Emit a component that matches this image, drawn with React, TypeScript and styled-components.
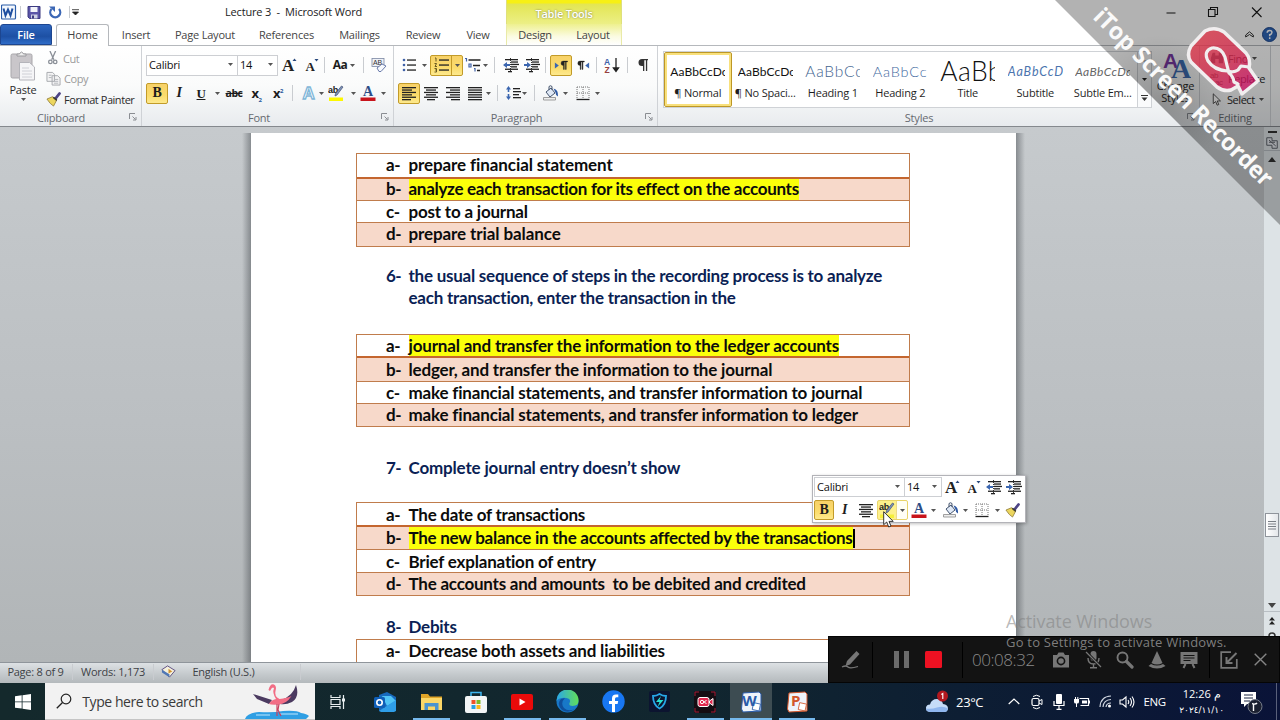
import type { ReactNode } from "react"
import styled, { createGlobalStyle, css } from "styled-components"

const GlobalStyle = createGlobalStyle`
  * { box-sizing: border-box; }
  body {
    margin: 0;
    overflow: hidden;
    font-family: "Open Sans", "Noto Sans", sans-serif;
    font-size: 11px;
    letter-spacing: -0.2px;
    color: #2b2b2b;
  }
  svg { display: block; flex: none; }
`

const Screen = styled.div`
  position: relative;
  width: 1280px;
  height: 720px;
  overflow: hidden;
  display: flex;
  flex-direction: column;
  background: #fff;
`

/* ---------- shared bits ---------- */

const Slot = styled.div<{ $w: number; $h?: number }>`
  width: ${(p) => p.$w}px;
  height: ${(p) => (p.$h ? `${p.$h}px` : "100%")};
  flex: none;
  display: flex;
  align-items: center;
  justify-content: center;
  white-space: nowrap;
`

const Gap = styled.div<{ $w: number }>`
  width: ${(p) => p.$w}px;
  flex: none;
`

const Divider = styled.div<{ $h?: number; $color?: string }>`
  width: 1px;
  height: ${(p) => p.$h ?? 16}px;
  flex: none;
  background: ${(p) => p.$color ?? "#c9ccd0"};
`

const Pressed = styled.div<{ $w: number; $h?: number; $soft?: boolean }>`
  width: ${(p) => p.$w}px;
  height: ${(p) => p.$h ?? 21}px;
  flex: none;
  display: flex;
  align-items: center;
  justify-content: center;
  border: 1px solid ${(p) => (p.$soft ? "#e9d46a" : "#c29b29")};
  border-radius: 2px;
  background: ${(p) => (p.$soft ? "linear-gradient(90deg, #fdf08c 18px, #fffef5 19px)" : "linear-gradient(#f7d168, #fbdc6c 60%, #fde98d)")};
`

const Glyph = styled.span<{ $size?: number; $italic?: boolean; $underline?: boolean; $strike?: boolean; $sans?: boolean }>`
  font-family: ${(p) => (p.$sans ? '"Open Sans", sans-serif' : '"Liberation Serif", serif')};
  font-weight: bold;
  font-size: ${(p) => p.$size ?? 14}px;
  line-height: 1;
  letter-spacing: -0.5px;
  color: #1d1d1d;
  font-style: ${(p) => (p.$italic ? "italic" : "normal")};
  text-decoration: ${(p) => (p.$underline ? "underline" : p.$strike ? "line-through" : "none")};
  sup, sub { font-size: 6px; color: #27579c; line-height: 0; }
`

const Caret = ({ color = "#555" }: { color?: string }) => (
  <svg width="5" height="3" viewBox="0 0 5 3">
    <path d="M0 0h5L2.5 3z" fill={color} />
  </svg>
)

type Row = [number, number]
const Lines = ({ rows, step = 2.4, y = 2 }: { rows: Row[]; step?: number; y?: number }) => (
  <>
    {rows.map(([x, w], i) => (
      <rect key={i} x={x} y={y + i * step} width={w} height="1.3" fill="#222" />
    ))}
  </>
)

const Icon = ({ size = 16, children }: { size?: number; children: ReactNode }) => (
  <svg width={size} height={size} viewBox="0 0 16 16">{children}</svg>
)

/* ---------- ribbon icons ---------- */

const AlignLeft = () => <Icon><Lines rows={[[1, 14], [1, 10], [1, 14], [1, 10], [1, 14], [1, 9]]} /></Icon>
const AlignCenter = () => <Icon><Lines rows={[[1, 14], [3, 10], [1, 14], [3, 10], [1, 14], [4, 8]]} /></Icon>
const AlignRight = () => <Icon><Lines rows={[[1, 14], [5, 10], [1, 14], [5, 10], [1, 14], [6, 9]]} /></Icon>
const Justify = () => <Icon><Lines rows={[[1, 14], [1, 14], [1, 14], [1, 14], [1, 14], [1, 14]]} /></Icon>

const Bullets = () => (
  <Icon>
    {[3, 8, 13].map((y) => <circle key={y} cx="3" cy={y} r="1.3" fill="#3f62a8" />)}
    <Lines rows={[[6, 9], [6, 9], [6, 9]]} step={5} y={2.4} />
  </Icon>
)
const Numbering = () => (
  <Icon>
    <path d="M2 1h1v3.500M1.500 6.500h2l-1.500 3h2M1.500 11.500h2v1.500h-1 1v2h-2" stroke="#6b5a20" strokeWidth="1" fill="none" />
    <Lines rows={[[6, 10], [6, 10], [6, 10]]} step={5} y={2.4} />
  </Icon>
)
const Multilevel = () => (
  <svg width="19" height="16" viewBox="0 0 19 16">
    <path d="M1 1.500h1.500v3M5 7h2v3H5zM10 11.500h1v3" stroke="#3f62a8" strokeWidth="1.200" fill="none" />
    <path d="M4.500 3h12M9 8.500h7M13 13.500h3" stroke="#222" strokeWidth="1.300" />
  </svg>
)
const Indent = ({ left }: { left?: boolean }) => (
  <Icon>
    <Lines rows={[[2, 13], [8, 7], [8, 8], [8, 6], [2, 13], [5, 4]]} />
    <path d={left ? "M0 8l4-3v2h3v2H4v2z" : "M7 8L3 5v2H0v2h3v2z"} fill="#3b66b0" />
    <path d="M7.5 1v14" stroke="#222" strokeWidth=".9" strokeDasharray="1 1" />
  </Icon>
)
const Spacing = () => (
  <Icon>
    <path d="M3.500 1L1 4.500h1.700v2.500h1.600V4.500H6zM3.500 15L1 11.500h1.700V9h1.600v2.500H6z" fill="#3b66b0" />
    <Lines rows={[[8, 7], [8, 8], [8, 6], [8, 8]]} step={3} y={3} />
  </Icon>
)
const Bucket = () => (
  <Icon>
    <path d="M3 7l5-4 4 5-5 4z" fill="#e0e9f6" stroke="#44546e" />
    <path d="M6 5V1.500q1.500-1.500 3 0V5" fill="none" stroke="#44546e" />
    <path d="M10.500 3.500q5 1 4.500 8-2.500-1-2.500-4z" fill="#2f5aa5" />
    <path d="M.5 12.500h12v2.500H.5z" fill="#eee" stroke="#888" strokeWidth=".8" />
  </Icon>
)
const Borders = () => (
  <Icon>
    <path d="M2 2h12v12M2 2v12M8 2v12M2 8h12" fill="none" stroke="#777" strokeDasharray="1 1" />
    <path d="M1.500 14.500h13" stroke="#222" strokeWidth="1.300" />
  </Icon>
)
const SortIcon = () => (
  <Icon>
    <text x="0" y="7.500" fontSize="8.500" fontWeight="bold" fill="#3f62a8" fontFamily="Liberation Sans, sans-serif">A</text>
    <text x="0.500" y="15.500" fontSize="8.500" fontWeight="bold" fill="#96403f" fontFamily="Liberation Sans, sans-serif">Z</text>
    <path d="M12 1v12M9.500 11l2.500 3.500 2.500-3.500z" stroke="#222" strokeWidth="1.300" fill="#222" />
  </Icon>
)
const Pilcrow = () => (
  <Icon>
    <path d="M13 2H7a3.500 3.500 0 0 0 0 7h1v5h1.300V3.300h1.600V14h1.300V3.300H13z" fill="#333" />
  </Icon>
)
const Direction = ({ rtl }: { rtl?: boolean }) => (
  <Icon size={14}>
    <g transform={rtl ? "translate(-6 0)" : ""}>
      <path d="M15.500 3.500H10.500a2.400 2.400 0 0 0 0 5h.3V13h1V4.500h1.200V13h1V4.500h1.500z" fill="#222" stroke="#222" strokeWidth=".4" />
    </g>
    <path d={rtl ? "M15 5v7l-4.500-3.500z" : "M1 5v7l4.500-3.500z"} fill="#3b66b0" />
  </Icon>
)
const Highlighter = ({ bar = "#fdf800" }: { bar?: string }) => (
  <svg width="17" height="17" viewBox="0 0 17 17">
    <text x="0" y="7.500" fontSize="9" fontWeight="bold" fill="#222" fontFamily="Liberation Sans, sans-serif">ab</text>
    <path d="M15 2l-6 8-2 1 .5-2.500L13.500 1z" fill="#7f93b8" stroke="#3d4f72" strokeWidth=".7" />
    <path d="M1 12.500h14v3.500H1z" fill={bar} />
  </svg>
)
const FontColor = () => (
  <svg width="16" height="17" viewBox="0 0 16 17">
    <text x="8" y="11" textAnchor="middle" fontSize="14" fontWeight="bold" fill="#2d4d87" fontFamily="Liberation Serif, serif">A</text>
    <path d="M.5 12.500h15v3.500H.5z" fill="#c8141c" />
  </svg>
)
const TextEffect = () => (
  <svg width="17" height="17" viewBox="0 0 17 17">
    <text x="8.500" y="14" textAnchor="middle" fontSize="17" fontWeight="bold" fill="#fff" stroke="#7fb6d8" strokeWidth="1.300" fontFamily="Liberation Sans, sans-serif">A</text>
  </svg>
)
const Resize = ({ up, size }: { up?: boolean; size: number }) => (
  <svg width="16" height="17" viewBox="0 0 16 17">
    <text x="7" y="14" textAnchor="middle" fontSize={size} fontWeight="bold" fill="#222" fontFamily="Liberation Serif, serif">A</text>
    <path d={up ? "M11.500 4l2-2.500 2 2.500z" : "M11.500 2h4l-2 2.500z"} fill="#27477c" />
  </svg>
)
const ClearFormat = () => (
  <Icon>
    <rect x="1" y="1.500" width="12" height="8" fill="#eef1f7" stroke="#7b87a2" strokeWidth=".8" />
    <text x="2" y="8" fontSize="7" fill="#333" fontFamily="Liberation Sans, sans-serif">AB</text>
    <path d="M6 11l5-4 4 2-5 5.500H8z" fill="#f7f9fd" stroke="#6a7bab" />
  </Icon>
)
const Painter = ({ size = 15 }: { size?: number }) => (
  <Icon size={size}>
    <path d="M14.500 1.500l-4 5" stroke="#4d4486" strokeWidth="2.800" strokeLinecap="round" />
    <path d="M1 7.500l6-2.500 4.500 3.500L8 15q-3.500-2-7-7.500z" fill="#ecd65e" stroke="#8a7430" strokeWidth=".8" />
    <path d="M8.500 5l3.500 3-1 1.500L7 6z" fill="#3d3c33" />
  </Icon>
)
const CutIcon = () => (
  <Icon size={14}>
    <path d="M4.500 0l4.500 10M11 0L6.500 10" stroke="#8a8f97" strokeWidth="1.500" />
    <circle cx="5" cy="12.500" r="2" fill="none" stroke="#8a8f97" strokeWidth="1.500" />
    <circle cx="10.500" cy="12.500" r="2" fill="none" stroke="#8a8f97" strokeWidth="1.500" />
  </Icon>
)
const CopyIcon = () => (
  <Icon size={15}>
    <path d="M1 1.500h6l2 2V11H1zM6.500 5h6l2.500 2.500V15H6.500z" fill="#f3f3f4" stroke="#a4a7ac" />
    <path d="M3 4.500h3M3 7h3M8.500 9h4.500M8.500 11h4.500M8.500 13h4.500" stroke="#b2b5ba" />
  </Icon>
)
const PasteIcon = () => (
  <svg width="26" height="30" viewBox="0 0 26 30">
    <rect x="1" y="3" width="21" height="24" rx="1.500" fill="#c9c6ca" stroke="#a9a7ab" />
    <path d="M7 5V3h2.500q2-4 4 0H16v2z" fill="#eee" stroke="#99989c" />
    <path d="M9.500 11.500h10l5 4.500v13h-15z" fill="#f5f5f7" stroke="#b4b4ba" />
    <path d="M12 17h7M12 20h10M12 23h10M12 26h10" stroke="#cfd0d6" />
  </svg>
)
const Launcher = () => (
  <svg width="8" height="8" viewBox="0 0 8 8">
    <path d="M.5 6V.5H6M3.500 3.500l3 3M7 4v3H4" fill="none" stroke="#8a8d92" />
  </svg>
)

/* ---------- title bar and tabs ---------- */

const TitleBar = styled.header`
  height: 24px;
  flex: none;
  display: flex;
  align-items: center;
`
const Title = styled.div`
  width: 137px;
  height: 24px;
  line-height: 23px;
  font-size: 11px;
  letter-spacing: -0.18px;
  white-space: pre;
  color: #222;
`
const ContextTitle = styled.div`
  width: 116px;
  height: 24px;
  padding-top: 4px;
  text-align: center;
  line-height: 20px;
  font-weight: 600;
  color: #fff;
  text-shadow: 0 0 2px #77774a;
  letter-spacing: -0.25px;
  border: 1px solid #dfe07c;
  border-width: 0 1px;
  background: linear-gradient(#f7f014 0 3px, #e3e552 4px, #ecef86 24px);
`
const TabBar = styled.nav`
  height: 22px;
  flex: none;
  display: flex;
  border-bottom: 1px solid #b5b8bc;
`
const tabBase = css`
  display: flex;
  align-items: center;
  justify-content: center;
  height: 21px;
  flex: none;
  color: #444;
  letter-spacing: -0.2px;
`
const Tab = styled.div<{ $w: number }>`
  ${tabBase}
  width: ${(p) => p.$w}px;
`
const FileTab = styled.div`
  ${tabBase}
  width: 52px;
  color: #fff;
  font-weight: 600;
  border-radius: 3px 3px 0 0;
  border: 1px solid #1d4690;
  background: linear-gradient(#2d66bf, #1d50a4 60%, #2f6cc7);
`
const ActiveTab = styled.div`
  ${tabBase}
  width: 53px;
  height: 22px;
  padding-bottom: 2px;
  border: 1px solid #b5b8bc;
  border-bottom: 0;
  border-radius: 3px 3px 0 0;
  background: #fff;
`
const ContextTabs = styled.div`
  display: flex;
  width: 116px;
  height: 21px;
  border: 1px solid #e9eaa8;
  border-width: 0 1px;
  background: linear-gradient(#eef08f, #fbfbe2 60%, #fff);
`

const Header = () => (
  <>
    <TitleBar>
      <Gap $w={1} />
      <svg width="16" height="16" viewBox="0 0 16 16">
        <rect x=".5" y="1" width="14" height="14" rx="1" fill="#f4f8fd" stroke="#2a5ca8" strokeWidth="1.200" />
        <path d="M2.500 4.500l2 7 2.500-6 2.500 6 2-7" fill="none" stroke="#1f4fa0" strokeWidth="2" />
      </svg>
      <Gap $w={3} />
      <Divider $h={12} />
      <Gap $w={5} />
      <svg width="16" height="15" viewBox="0 0 16 15">
        <path d="M2 1.500h12v12H3.500L2 12z" fill="#5b55a8" stroke="#3c3a80" />
        <path d="M4.500 2h7v5h-7z" fill="#f3f4fa" />
        <path d="M5 9.500h6.500v4H5z" fill="#cfd1e4" />
        <path d="M6 10.500h2v3H6z" fill="#3c3a80" />
      </svg>
      <Gap $w={6} />
      <svg width="14" height="14" viewBox="0 0 14 14">
        <path d="M3.500 4A5 5 0 1 0 11 4" fill="none" stroke="#3c67b5" strokeWidth="2.300" />
        <path d="M1 1.500h6v5.500z" fill="#3c67b5" />
      </svg>
      <Gap $w={7} />
      <Divider $h={12} />
      <Gap $w={2} />
      <svg width="7" height="7" viewBox="0 0 7 7"><path d="M0 .7h7M.5 3h6L3.500 6z" fill="#222" stroke="#222" strokeWidth=".8" /></svg>
      <Gap $w={146} />
      <Title>Lecture 3  -  Microsoft Word</Title>
      <Gap $w={144} />
      <ContextTitle>Table Tools</ContextTitle>
      <Gap $w={542} />
      <svg width="98" height="16" viewBox="0 0 98 16">
        <path d="M2.500 9h9M44.500 5.500h6.500v7h-6.500zM46.500 5.500v-2h7v7h-2.300M88 3.500l9.500 9.500M97.500 3.500L88 13" fill="none" stroke="#1a1a1a" strokeWidth="1.100" />
      </svg>
    </TitleBar>
    <TabBar>
      <FileTab>File</FileTab>
      <Gap $w={4} />
      <ActiveTab>Home</ActiveTab>
      <Tab $w={54}>Insert</Tab>
      <Tab $w={84}>Page Layout</Tab>
      <Tab $w={79}>References</Tab>
      <Tab $w={67}>Mailings</Tab>
      <Tab $w={60}>Review</Tab>
      <Tab $w={50}>View</Tab>
      <Gap $w={3} />
      <ContextTabs>
        <Tab $w={56}>Design</Tab>
        <Tab $w={60}>Layout</Tab>
      </ContextTabs>
      <Gap $w={620} />
      <Slot $w={14}>
        <svg width="9" height="7" viewBox="0 0 9 7"><path d="M.7 4L4.500.8 8.300 4v2L4.500 3.500.7 6z" fill="#fff" stroke="#333" /></svg>
      </Slot>
      <Slot $w={26}>
        <svg width="15" height="15" viewBox="0 0 15 15">
          <circle cx="7.500" cy="7.500" r="7" fill="#2f66b8" stroke="#1d468c" />
          <path d="M5.200 5.800q0-2.300 2.400-2.300t2.300 2-2.200 2.200v1.500M7.700 10.300v1.700" fill="none" stroke="#fff" strokeWidth="1.500" />
        </svg>
      </Slot>
    </TabBar>
  </>
)

/* ---------- ribbon ---------- */

const Ribbon = styled.section`
  height: 81px;
  flex: none;
  display: flex;
  background: linear-gradient(#fff, #fafbfb 50%, #e8ebee);
  border-bottom: 1px solid #85898e;
`
const Group = styled.div<{ $w: number }>`
  width: ${(p) => p.$w}px;
  height: 80px;
  flex: none;
  display: flex;
  flex-direction: column;
  border-right: 1px solid #cfd2d6;
`
const GroupBody = styled.div`
  height: 64px;
  flex: none;
  display: flex;
`
const GroupFooter = styled.div`
  height: 16px;
  display: flex;
  align-items: center;
  justify-content: flex-end;
  padding: 0 4px 2px 0;
  color: #666a70;
`
const GroupName = styled.span<{ $shift?: number }>`
  flex: 1;
  text-align: center;
  padding-right: ${(p) => p.$shift ?? 7}px;
  letter-spacing: -0.2px;
`
const Tools = styled.div`
  display: flex;
  flex-direction: column;
  padding-top: 8px;
  gap: 6px;
`
const ToolRow = styled.div`
  height: 22px;
  display: flex;
  align-items: center;
`
const Combo = styled.div<{ $w: number; $h?: number }>`
  width: ${(p) => p.$w}px;
  height: ${(p) => p.$h ?? 21}px;
  flex: none;
  display: flex;
  align-items: center;
  justify-content: space-between;
  padding: 0 4px 1px 2px;
  border: 1px solid #cdcfd3;
  background: #fff;
  color: #111;
  & + & { border-left: 0; }
`
const PasteButton = styled.div`
  width: 46px;
  display: flex;
  flex-direction: column;
  align-items: center;
  padding-top: 5px;
  line-height: 17px;
`
const ClipList = styled.div`
  padding-top: 2px;
  white-space: nowrap;
  letter-spacing: -0.45px;
`
const ClipItem = styled.div<{ $off?: boolean }>`
  height: 20.5px;
  display: flex;
  align-items: center;
  gap: 3px;
  color: ${(p) => (p.$off ? "#9a9a9a" : "#2b2b2b")};
`

const Gallery = styled.div`
  width: 475px;
  height: 57px;
  margin: 5px 0 0 5px;
  display: flex;
  flex: none;
  border: 1px solid #cfd2d6;
  background: #fff;
`
const StyleCard = styled.div<{ $active?: boolean }>`
  width: 67.5px;
  flex: none;
  display: flex;
  flex-direction: column;
  align-items: center;
  border: ${(p) => (p.$active ? "1px solid #bd9726" : "1px solid transparent")};
  border-radius: 2px;
  box-shadow: ${(p) => (p.$active ? "inset 0 0 0 2px #f8e07c" : "none")};
`
const Sample = styled.div<{ $size: number; $color: string; $italic?: boolean; $thin?: boolean; $ls?: number }>`
  width: 55px;
  height: 32px;
  line-height: 37px;
  overflow: hidden;
  white-space: nowrap;
  font-family: Lato, sans-serif;
  font-weight: ${(p) => (p.$thin ? 300 : 400)};
  font-size: ${(p) => p.$size}px;
  letter-spacing: ${(p) => p.$ls ?? 0}px;
  color: ${(p) => p.$color};
  font-style: ${(p) => (p.$italic ? "italic" : "normal")};
`
const SampleName = styled.div`
  line-height: 16px;
  white-space: nowrap;
  color: #1f1f1f;
`
const GalleryScroll = styled.div`
  width: 14px;
  height: 57px;
  margin-top: 5px;
  flex: none;
  border: 1px solid #cfd2d6;
  border-left: 0;
  background: #fafbfc;
  display: grid;
  grid-template-rows: 18px 19px 1fr;
  place-items: center;
`
const ChangeStyles = styled.div`
  width: 47px;
  display: flex;
  flex-direction: column;
  align-items: center;
  padding-top: 4px;
  line-height: 12px;
  text-align: center;
`
const EditItem = styled.div`
  height: 20.5px;
  display: flex;
  align-items: center;
  gap: 4px;
`

const styleCards = [
  { name: "¶ Normal", text: "AaBbCcDc", size: 12, color: "#111", active: true, ls: 0.1 },
  { name: "¶ No Spaci...", text: "AaBbCcDc", size: 12, color: "#111", ls: 0.1 },
  { name: "Heading 1", text: "AaBbCc", size: 15.5, color: "#43658f", thin: true, ls: 0.8 },
  { name: "Heading 2", text: "AaBbCc", size: 14.5, color: "#3f69a0", thin: true, ls: 0.8 },
  { name: "Title", text: "AaBb", size: 26.5, color: "#111", thin: true, ls: 0.4 },
  { name: "Subtitle", text: "AaBbCcD", size: 12.5, color: "#4b74ae", italic: true, ls: 0.9 },
  { name: "Subtle Em...", text: "AaBbCcDd", size: 12, color: "#666", italic: true, ls: 0.4 },
]

const RibbonBar = () => (
  <Ribbon>
    <Group $w={142}>
      <GroupBody>
        <PasteButton>
          <PasteIcon />
          <span>Paste</span>
          <Caret />
        </PasteButton>
        <ClipList>
          <ClipItem $off><CutIcon />Cut</ClipItem>
          <ClipItem $off><CopyIcon />Copy</ClipItem>
          <ClipItem><Painter />Format Painter</ClipItem>
        </ClipList>
      </GroupBody>
      <GroupFooter><GroupName>Clipboard</GroupName><Launcher /></GroupFooter>
    </Group>

    <Group $w={252}>
      <GroupBody>
        <Gap $w={4} />
        <Tools>
          <ToolRow>
            <Combo $w={92}>Calibri<Caret /></Combo>
            <Combo $w={40}>14<Caret /></Combo>
            <Slot $w={22}><Resize up size={17} /></Slot>
            <Slot $w={22}><Resize size={13} /></Slot>
            <Gap $w={2} />
            <Divider />
            <Slot $w={38}><Glyph $sans $size={12}>Aa</Glyph><Gap $w={3} /><Caret /></Slot>
            <Divider />
            <Slot $w={29}><ClearFormat /></Slot>
          </ToolRow>
          <ToolRow>
            <Pressed $w={22}><Glyph>B</Glyph></Pressed>
            <Slot $w={22}><Glyph $italic>I</Glyph></Slot>
            <Slot $w={22}><Glyph $underline $size={13}>U</Glyph></Slot>
            <Slot $w={10}><Caret /></Slot>
            <Slot $w={24}><Glyph $strike $sans $size={10.500}>abc</Glyph></Slot>
            <Slot $w={21}><Glyph $sans $size={13}>x<sub>2</sub></Glyph></Slot>
            <Slot $w={22}><Glyph $sans $size={13}>x<sup>2</sup></Glyph></Slot>
            <Gap $w={3} />
            <Divider />
            <Gap $w={4} />
            <Slot $w={22}><TextEffect /></Slot>
            <Slot $w={5}><Caret /></Slot>
            <Slot $w={25}><Highlighter /></Slot>
            <Slot $w={8}><Caret /></Slot>
            <Slot $w={22}><FontColor /></Slot>
            <Slot $w={8}><Caret /></Slot>
          </ToolRow>
        </Tools>
      </GroupBody>
      <GroupFooter><GroupName $shift={5}>Font</GroupName><Launcher /></GroupFooter>
    </Group>

    <Group $w={264}>
      <GroupBody>
        <Gap $w={4} />
        <Tools>
          <ToolRow>
            <Slot $w={22}><Bullets /></Slot>
            <Slot $w={8}><Caret /></Slot>
            <Gap $w={2} />
            <Pressed $w={33}>
              <Slot $w={20}><Numbering /></Slot>
              <Divider $h={19} $color="#c29b29" />
              <Slot $w={10}><Caret /></Slot>
            </Pressed>
            <Slot $w={20}><Multilevel /></Slot>
            <Slot $w={5}><Caret /></Slot>
            <Gap $w={6} />
            <Divider />
            <Gap $w={5} />
            <Slot $w={21}><Indent left /></Slot>
            <Slot $w={21}><Indent /></Slot>
            <Gap $w={3} />
            <Divider />
            <Gap $w={4} />
            <Pressed $w={22}><Direction /></Pressed>
            <Slot $w={22}><Direction rtl /></Slot>
            <Gap $w={2} />
            <Divider />
            <Slot $w={30}><SortIcon /></Slot>
            <Divider />
            <Slot $w={30}><Pilcrow /></Slot>
          </ToolRow>
          <ToolRow>
            <Pressed $w={22}><AlignLeft /></Pressed>
            <Slot $w={22}><AlignCenter /></Slot>
            <Slot $w={22}><AlignRight /></Slot>
            <Slot $w={22}><Justify /></Slot>
            <Slot $w={4}><Caret /></Slot>
            <Gap $w={7} />
            <Divider />
            <Gap $w={6} />
            <Slot $w={18}><Spacing /></Slot>
            <Slot $w={4}><Caret /></Slot>
            <Gap $w={8} />
            <Divider />
            <Gap $w={6} />
            <Slot $w={20}><Bucket /></Slot>
            <Slot $w={9}><Caret /></Slot>
            <Slot $w={25}><Borders /></Slot>
            <Slot $w={4}><Caret /></Slot>
          </ToolRow>
        </Tools>
      </GroupBody>
      <GroupFooter><GroupName $shift={6}>Paragraph</GroupName><Launcher /></GroupFooter>
    </Group>

    <Group $w={542}>
      <GroupBody>
        <Gallery>
          {styleCards.map((c) => (
            <StyleCard key={c.name} $active={c.active}>
              <Sample $size={c.size} $color={c.color} $italic={c.italic} $thin={c.thin} $ls={c.ls}>{c.text}</Sample>
              <SampleName>{c.name}</SampleName>
            </StyleCard>
          ))}
        </Gallery>
        <GalleryScroll>
          <Caret color="#bbb" />
          <Caret color="#222" />
          <svg width="7" height="6" viewBox="0 0 7 6"><path d="M0 .5h7" stroke="#333" /><path d="M.5 2.500h6L3.500 6z" fill="#333" /></svg>
        </GalleryScroll>
        <ChangeStyles>
          <svg width="30" height="30" viewBox="0 0 30 30">
            <text x="2" y="18" fontSize="21" fontWeight="bold" fill="#7c3aa6" fontFamily="Liberation Sans, sans-serif">A</text>
            <text x="10" y="28" fontSize="28" fontWeight="bold" fill="#3f6fb5" fontFamily="Liberation Serif, serif">A</text>
          </svg>
          <span>Change<br />Styles</span>
        </ChangeStyles>
      </GroupBody>
      <GroupFooter><GroupName $shift={7}>Styles</GroupName><Launcher /></GroupFooter>
    </Group>

    <Group $w={71}>
      <GroupBody>
        <Gap $w={10} />
        <ClipList>
          <EditItem>
            <Icon size={14}><path d="M1 8l2-6h3v12H1zM15 8l-2-6h-3v12h5zM6 5h4v4H6z" fill="#56606f" /></Icon>
            Find<Caret />
          </EditItem>
          <EditItem>
            <svg width="14" height="15" viewBox="0 0 14 15" fontSize="8" fontFamily="Liberation Sans, sans-serif" fill="#444">
              <text x="0" y="7">ab</text><text x="5" y="14">ac</text>
            </svg>
            Replace
          </EditItem>
          <EditItem>
            <Icon size={13}><path d="M4 1v12l3-2.500 1.800 4.500 2-.8-1.900-4.400h4z" fill="#fff" stroke="#333" /></Icon>
            Select<Caret />
          </EditItem>
        </ClipList>
      </GroupBody>
      <GroupFooter><Gap $w={4} /><GroupName $shift={0}>Editing</GroupName></GroupFooter>
    </Group>
  </Ribbon>
)

/* ---------- document ---------- */

const Workspace = styled.main`
  height: 535px;
  flex: none;
  display: flex;
  background: linear-gradient(#c6cacd, #bbbfc2 55%, #b1b5b7);
`
const Page = styled.article`
  width: 765px;
  height: 529px;
  margin: 6px 249px 0 251px;
  flex: none;
  padding: 20px 0 0 105px;
  overflow: hidden;
  background: #fff;
`
const PageShade = styled.div`
  display: flex;
  width: 1264px;
  background:
    linear-gradient(90deg, rgba(60, 65, 70, 0), rgba(60, 65, 70, 0.45)) 242px 6px / 9px 529px no-repeat,
    linear-gradient(270deg, rgba(60, 65, 70, 0), rgba(60, 65, 70, 0.45)) 1016px 6px / 9px 529px no-repeat;
`
const docText = css`
  font-family: Lato, sans-serif;
  font-weight: bold;
  font-size: 17px;
  letter-spacing: -0.25px;
  white-space: pre;
`
const AnswerTable = styled.div`
  width: 554px;
  border: 1px solid #c07c4c;
`
const Answer = styled.div<{ $h: number; $shaded?: boolean; $head?: boolean }>`
  ${docText}
  height: ${(p) => p.$h}px;
  display: flex;
  align-items: center;
  box-sizing: content-box;
  padding-left: 29px;
  color: #0c0c0c;
  background: ${(p) => (p.$shaded ? "#f7d9ca" : "#fff")};
  border-bottom: ${(p) => (p.$head ? "2px solid #c4662f" : "1px solid #c07c4c")};
  &:last-child { border-bottom: 0; }
`
const Marker = styled.span<{ $lift?: number }>`
  width: 22.5px;
  flex: none;
  letter-spacing: -0.5px;
  padding-bottom: ${(p) => p.$lift ?? 0}px;
`
const Mark = styled.span<{ $on?: boolean; $ls?: number; $lift: number }>`
  height: 100%;
  display: flex;
  align-items: center;
  padding-bottom: ${(p) => p.$lift}px;
  letter-spacing: ${(p) => p.$ls ?? -0.25}px;
  background: ${(p) => (p.$on ? "#fbff0a" : "none")};
`
const Question = styled.div<{ $h: number; $top: number }>`
  ${docText}
  height: ${(p) => p.$h}px;
  padding: ${(p) => p.$top}px 0 0 30px;
  display: flex;
  line-height: 22.6px;
  color: #0b1f55;
`
const QuestionText = styled.span<{ $ls: number }>`
  letter-spacing: ${(p) => p.$ls}px;
`
const TextCaret = styled.span`
  width: 2px;
  height: 19px;
  background: #000;
`

type Choice = { text: string; h: number; on?: boolean; caret?: boolean; ls?: number; lift?: number }
const Choices = ({ items }: { items: Choice[] }) => (
  <AnswerTable>
    {items.map((c, i) => (
      <Answer key={i} $h={c.h} $head={i === 0} $shaded={i % 2 === 1}>
        <Marker $lift={c.lift ?? 1}>{"abcd"[i]}-</Marker>
        <Mark $on={c.on} $ls={c.ls} $lift={c.lift ?? 1}>{c.text}</Mark>
        {c.caret && <TextCaret />}
      </Answer>
    ))}
  </AnswerTable>
)

const Document = () => (
  <Page>
    <Choices
      items={[
        { text: "prepare financial statement", h: 23, ls: -0.1, lift: 2.5 },
        { text: "analyze each transaction for its effect on the accounts", h: 21, on: true, ls: -0.29, lift: 2.5 },
        { text: "post to a journal", h: 21, ls: -0.2 },
        { text: "prepare trial balance", h: 23, ls: -0.1, lift: 2.5 },
      ]}
    />
    <Question $h={87} $top={17.5}>
      <Marker>6-</Marker>
      <QuestionText $ls={-0.24}>{"the usual sequence of steps in the recording process is to analyze\neach transaction, enter the transaction in the"}</QuestionText>
    </Question>
    <Choices
      items={[
        { text: "journal and transfer the information to the ledger accounts", h: 21, on: true, ls: -0.18 },
        { text: "ledger, and transfer the information to the journal", h: 23, ls: -0.19 },
        { text: "make financial statements, and transfer information to journal", h: 21, ls: -0.185 },
        { text: "make financial statements, and transfer information to ledger", h: 22, ls: -0.175 },
      ]}
    />
    <Question $h={75} $top={30}>
      <Marker>7-</Marker>
      <QuestionText $ls={-0.17}>Complete journal entry doesn’t show</QuestionText>
    </Question>
    <Choices
      items={[
        { text: "The date of transactions", h: 22, lift: 0 },
        { text: "The new balance in the accounts affected by the transactions", h: 22, on: true, caret: true, ls: -0.265 },
        { text: "Brief explanation of entry", h: 22, ls: -0.2, lift: 0 },
        { text: "The accounts and amounts  to be debited and credited", h: 22, ls: -0.23 },
      ]}
    />
    <Question $h={43} $top={20}>
      <Marker>8-</Marker>
      <QuestionText $ls={-0.25}>Debits</QuestionText>
    </Question>
    <Choices items={[{ text: "Decrease both assets and liabilities", h: 23, ls: -0.19, lift: 2 }]} />
  </Page>
)

const ScrollBar = styled.div`
  width: 16px;
  display: flex;
  flex-direction: column;
  align-items: center;
  background: #dde3e6;
`
const Thumb = styled.div`
  width: 14px;
  height: 24px;
  display: flex;
  align-items: center;
  justify-content: center;
  border: 1px solid #8f949b;
  background: linear-gradient(90deg, #fff, #e4e7ea);
`
const Cell = styled.div<{ $h: number; $line?: boolean }>`
  width: 16px;
  height: ${(p) => p.$h}px;
  flex: none;
  display: flex;
  align-items: center;
  justify-content: center;
  border-bottom: ${(p) => (p.$line ? "1px solid #b9bfc4" : "0")};
`

const VerticalScroll = () => (
  <ScrollBar>
    <Cell $h={9}><svg width="9" height="2"><path d="M0 1h9" stroke="#333" strokeWidth="2" /></svg></Cell>
    <Cell $h={15} $line>
      <Icon size={12}><path d="M1 1h7v4h7v10H8v-4H1zM4 7h8M4 4l9 8" fill="#e5e9ee" stroke="#5d6269" strokeWidth="1.300" /></Icon>
    </Cell>
    <Cell $h={16}><svg width="8" height="5"><path d="M0 5h8L4 0z" fill="#333" /></svg></Cell>
    <Cell $h={346} />
    <Thumb><svg width="8" height="9"><path d="M0 .5h8M0 3h8M0 5.500h8M0 8h8" stroke="#7a7f86" /></svg></Thumb>
    <Cell $h={62} />
    <Cell $h={13} $line><svg width="8" height="5"><path d="M0 0h8L4 5z" fill="#444" /></svg></Cell>
    <Cell $h={17}><svg width="6" height="8"><path d="M0 3.500h6L3 0zM0 7.500h6L3 4z" fill="#222" /></svg></Cell>
    <Cell $h={14}><svg width="8" height="8"><circle cx="4" cy="4" r="3" fill="none" stroke="#333" strokeWidth="1.500" /></svg></Cell>
  </ScrollBar>
)

const StatusBar = styled.footer`
  height: 21px;
  flex: none;
  display: flex;
  align-items: center;
  padding-bottom: 3px;
  color: #3e4246;
  letter-spacing: -0.25px;
  border-top: 1px solid #8f959b;
  background: linear-gradient(#dde1e4, #c3c8cb 60%, #b4b9bc);
`

/* ---------- taskbar ---------- */

const Taskbar = styled.div`
  height: 37px;
  flex: none;
  display: flex;
  color: #fff;
  background: linear-gradient(90deg, #14292c, #11262f 55%, #0d1e33 75%, #0a1338);
`
const SearchBox = styled.div`
  width: 270px;
  height: 37px;
  flex: none;
  display: flex;
  align-items: center;
  padding-left: 11px;
  background: #f2f2f2;
  border-bottom: 1px solid #c5c5c5;
  color: #3a3a3a;
  font-size: 14px;
  letter-spacing: -0.45px;
`
const TaskItem = styled.div<{ $open?: number; $active?: boolean; $w?: number }>`
  width: ${(p) => p.$w ?? 45.7}px;
  height: 37px;
  flex: none;
  display: flex;
  align-items: center;
  justify-content: center;
  background:
    linear-gradient(#76b9ed, #76b9ed) center bottom / ${(p) => p.$open ?? 0}px 2px no-repeat,
    linear-gradient(${(p) => (p.$active ? "#3d4c52, #3d4c52" : "transparent, transparent")}) center / 42px 100% no-repeat;
`
const Clock = styled.div`
  width: 60px;
  height: 37px;
  flex: none;
  display: flex;
  flex-direction: column;
  align-items: center;
  justify-content: center;
  line-height: 17px;
  font-size: 11px;
  letter-spacing: -0.4px;
  direction: ltr;
`
const DateText = styled.span`
  font-family: "DejaVu Sans", sans-serif;
  font-size: 9px;
  letter-spacing: -0.9px;
`
const TrayText = styled.span<{ $size: number }>`
  font-size: ${(p) => p.$size}px;
  letter-spacing: -0.4px;
  white-space: nowrap;
`

const Flamingo = () => (
  <svg width="66" height="36" viewBox="0 0 66 36">
    <path d="M1 36q2-6 14-7 14 1 24-1 14-1 18 2 6 1 8 3l-3 3z" fill="#2f9fe4" />
    <path d="M12 32h14M36 31h18" stroke="#8fd0f5" strokeWidth="1.500" />
    <path d="M28 17L9 11l4 5 12 5zM37 17q12-4 15-15 4 12-4 17-6 3-12 2z" fill="#4b3a60" />
    <path d="M25 21q2-4 7-5-4-6-2-11-2-2-4 3l-1.500-1Q26 .5 30 1.500q3 1.500 1.500 6.500t4 8q8-1 12-3-5 8-13 8.500-7 .5-9.500-.5z" fill="#f26d85" />
    <path d="M33 21v12M35 21l-1 6 3 6" stroke="#c9405f" strokeWidth="1.200" fill="none" />
  </svg>
)

const OfficeTile = ({ letter, color }: { letter: string; color: string }) => (
  <svg width="22" height="22" viewBox="0 0 22 22">
    <path d="M3 2l16-1 2 2v17l-18 1-1.500-3z" fill="#eef3fa" stroke={color} />
    <path d="M13 12h7v7h-7z" fill="#fff" stroke={color} strokeWidth=".8" transform="rotate(12 15 15)" />
    <text x="9.500" y="15" textAnchor="middle" fontSize="15" fontWeight="bold" fill={color} fontFamily="Open Sans, sans-serif">{letter}</text>
  </svg>
)

const TaskbarRow = () => (
  <Taskbar>
    <Slot $w={45}>
      <svg width="16" height="16" viewBox="0 0 16 16"><path d="M0 2.300l6.700-1v6.200H0zM7.500 1.200L16 0v7.500H7.500zM0 8.300h6.700v6.300L0 13.700zM7.500 8.300H16V16l-8.500-1.200z" fill="#fff" /></svg>
    </Slot>
    <SearchBox>
      <svg width="16" height="16" viewBox="0 0 16 16"><circle cx="10" cy="6" r="4.800" fill="none" stroke="#222" strokeWidth="1.200" /><path d="M6.500 9.500L.8 15.200" stroke="#222" strokeWidth="1.300" /></svg>
      <Gap $w={10} />
      <Slot $w={121}>Type here to search</Slot>
      <Gap $w={41} />
      <Flamingo />
    </SearchBox>
    <TaskItem $w={45}>
      <svg width="16" height="16" viewBox="0 0 16 16"><path d="M1 1v2.500h9V1M1 15v-2.500h9V15M1 5.500h9v5H1zM13.500 1v14" fill="none" stroke="#e8eef0" strokeWidth="1.200" /><path d="M12 4.500h3v3h-3z" fill="#e8eef0" /></svg>
    </TaskItem>
    <TaskItem $w={49}>
      <svg width="24" height="22" viewBox="0 0 24 22">
        <path d="M6 4l8-3 9 5v14H6z" fill="#1769bd" /><path d="M9 5h9l5 5-9 5z" fill="#50c3f5" />
        <path d="M6 20l17-11v11l-2 1H8z" fill="#2f9ee8" /><rect x="1" y="6" width="11" height="11" rx="1.500" fill="#0f5fb8" />
        <circle cx="6.500" cy="11.500" r="2.700" fill="none" stroke="#fff" strokeWidth="1.600" />
      </svg>
    </TaskItem>
    <TaskItem $w={44.5} $open={37}>
      <svg width="21" height="18" viewBox="0 0 21 18"><path d="M0 1h7l2 2.500h12V17H0z" fill="#e0a528" /><path d="M0 5h21v12H0z" fill="#fbd767" /><path d="M3.500 17V10h14v7h-3.500v-3.500h-7V17z" fill="#4b94cf" /></svg>
    </TaskItem>
    <TaskItem>
      <svg width="22" height="22" viewBox="0 0 22 22">
        <path d="M6 6V1.500h10V6" fill="none" stroke="#3fb6f0" strokeWidth="1.500" /><rect y="5" width="22" height="17" rx="2" fill="#f3f5f6" />
        <path d="M6.500 9h4v4h-4z" fill="#f0502a" /><path d="M11.500 9h4v4h-4z" fill="#7eb928" /><path d="M6.500 14h4v4h-4z" fill="#2aa0e6" /><path d="M11.500 14h4v4h-4z" fill="#fbb81d" />
      </svg>
    </TaskItem>
    <TaskItem $open={37}>
      <svg width="22" height="16" viewBox="0 0 22 16"><rect width="22" height="16" rx="2" fill="#ea0a0a" /><path d="M8.500 4.500v7l6-3.500z" fill="#fff" /></svg>
    </TaskItem>
    <TaskItem $w={46} $open={37}>
      <svg width="23" height="23" viewBox="0 0 23 23">
        <defs><linearGradient id="edge" x1="0" x2="1"><stop offset="0" stopColor="#2aa7e8" /><stop offset="1" stopColor="#62df58" /></linearGradient></defs>
        <circle cx="11.500" cy="11.500" r="11" fill="#1878c8" />
        <path d="M.5 11A11 11 0 0 1 22.500 10q.5 6-6 6-4 0-3-3 2-4-3-5Q4 7 .5 11z" fill="url(#edge)" />
        <path d="M9 8q-5 5-1 10 4 4 11 1-7 5-13 1Q0 14 5 9z" fill="#0f4f9c" />
      </svg>
    </TaskItem>
    <TaskItem>
      <svg width="23" height="23" viewBox="0 0 23 23"><circle cx="11.500" cy="11.500" r="11.200" fill="#1877f2" /><path d="M10 22v-8H7v-3h3V8.500q0-4 4-4h2.300v2.800H14.500q-1.500 0-1.500 1.600V11h3.200l-.6 3H13v8z" fill="#fff" /></svg>
    </TaskItem>
    <TaskItem>
      <svg width="21" height="21" viewBox="0 0 21 21"><rect width="21" height="21" rx="2" fill="#0c1430" /><path d="M4 5q3.500 0 6.500-2 3 2 6.500 2 0 9-6.500 12.500Q4 14 4 5z" fill="none" stroke="#28a7e8" strokeWidth="1.800" /><path d="M12 5L7 11h3.500l-2 5 6-7h-4z" fill="#27e0d2" /></svg>
    </TaskItem>
    <TaskItem $w={46} $open={37}>
      <svg width="22" height="22" viewBox="0 0 22 22"><rect width="22" height="22" rx="2" fill="#150d13" /><path d="M1 5V1h4M17 1h4v4M21 17v4h-4M5 21H1v-4" fill="none" stroke="#a31c36" /><rect x="4" y="6.500" width="11" height="9" rx="2" fill="#e2294f" stroke="#fff" /><path d="M15.500 10l3.500-2.500v7L15.500 12z" fill="#e2294f" stroke="#fff" /><circle cx="8" cy="11" r="1.700" fill="none" stroke="#fff" /><path d="M9.500 10l3 3M9.500 12l3-3" stroke="#fff" /></svg>
    </TaskItem>
    <TaskItem $open={42} $active><OfficeTile letter="W" color="#2a5ba9" /></TaskItem>
    <TaskItem $open={36}><OfficeTile letter="P" color="#d2562b" /></TaskItem>
    <Gap $w={104} />
    <Slot $w={26}>
      <svg width="24" height="24" viewBox="0 0 24 24">
        <path d="M5 22q-4.500-.5-4-4.500.5-3 4-3Q6.500 9 12 9q5 .5 6 5 5 .5 5 4.500-.5 3.500-4 3.500z" fill="#c5dcf8" />
        <path d="M5 22q-4-.5-4-3.500 5 1 11-1t11 1q-.5 3.500-4 3.500z" fill="#8fb6ee" />
        <circle cx="17.500" cy="6" r="5.500" fill="#b3181f" /><path d="M16.300 4.500l1.500-1V9" fill="none" stroke="#fff" strokeWidth="1.100" />
      </svg>
    </Slot>
    <Slot $w={40}><TrayText $size={13}>23°C</TrayText></Slot>
    <Gap $w={13} />
    <Slot $w={22}><svg width="12" height="7"><path d="M.7 6L6 1l5.300 5" fill="none" stroke="#fff" strokeWidth="1.200" /></svg></Slot>
    <Slot $w={24}>
      <svg width="12" height="16" viewBox="0 0 12 16"><rect x="1" y="4.500" width="7" height="7" rx="1.500" fill="none" stroke="#fff" strokeWidth="1.200" /><path d="M8 7l3-1.500v5L8 9M2 2.500q3.500-2.500 7 0M2 13.500q3.500 2.500 7 0" fill="none" stroke="#fff" /></svg>
    </Slot>
    <Slot $w={20}>
      <svg width="12" height="16" viewBox="0 0 12 16"><rect x="3" y="0" width="6" height="10" rx="1" fill="#fff" /><path d="M1 7v4.500h10V7M6 12v3M3.500 15.300h5" fill="none" stroke="#fff" strokeWidth="1.200" /></svg>
    </Slot>
    <Slot $w={26}>
      <svg width="16" height="12" viewBox="0 0 16 12"><path d="M5.500 2.500h9v7h-8" fill="none" stroke="#fff" strokeWidth="1.200" /><path d="M8 4.500h5v3H8zM15 4.500h1v3h-1zM0 3h5v3q0 1.500-2 1.500V11H2V7.500Q0 7.500 0 6zM1 1h1v2H1zM3.300 1h1v2h-1z" fill="#fff" /></svg>
    </Slot>
    <Slot $w={22}>
      <svg width="13" height="13" viewBox="0 0 13 13"><path d="M1 12Q1.500 1.500 12 1M4 12Q4.500 5 12 4.500M7 12q.5-4 5-4" fill="none" stroke="#cfd5df" strokeWidth="1.200" /><circle cx="10.500" cy="11" r="1.500" fill="#fff" /></svg>
    </Slot>
    <Slot $w={21}>
      <svg width="16" height="14" viewBox="0 0 16 14"><path d="M1 5h2.500L7 2v10L3.500 9H1zM9 5q1.500 2 0 4M11 3q3 4 0 8M13 1.500q4 5.500 0 11" fill="none" stroke="#fff" strokeWidth="1.100" /></svg>
    </Slot>
    <Slot $w={34}><TrayText $size={11.500}>ENG</TrayText></Slot>
    <Clock>
      <span>12:26 م</span>
      <DateText>٢٠٢٤/١١/١٠</DateText>
    </Clock>
    <Slot $w={39}>
      <svg width="24" height="26" viewBox="0 0 24 26"><path d="M2 3h15v12h-9l-3 3v-3H2z" fill="#fff" /><path d="M5 6h9M5 9h9M5 12h6" stroke="#1a2442" /><circle cx="16" cy="17.500" r="7" fill="#1b2030" stroke="#777d8c" /><path d="M13.500 14l.5 1q3 .5 4-1M14.500 15v7" fill="none" stroke="#fff" strokeWidth="1.400" /></svg>
    </Slot>
    <Gap $w={5} />
    <Divider $h={37} $color="#59607a" />
  </Taskbar>
)

/* ---------- floating layers ---------- */

const MiniToolbar = styled.div`
  position: absolute;
  left: 812px;
  top: 475px;
  width: 214px;
  height: 48px;
  padding: 1px;
  border: 1px solid #b3b3b8;
  background: #fff;
  box-shadow: 1px 1px 3px rgba(0, 0, 0, 0.25);
`
const MiniRow = styled.div<{ $h: number }>`
  height: ${(p) => p.$h}px;
  display: flex;
  align-items: center;
`
const Pointer = styled.div`
  position: absolute;
  left: 883px;
  top: 511px;
`

const Mini = () => (
  <MiniToolbar>
    <MiniRow $h={20}>
      <Combo $w={91} $h={20}>Calibri<Caret /></Combo>
      <Combo $w={37} $h={20}>14<Caret /></Combo>
      <Slot $w={20}><Resize up size={17} /></Slot>
      <Slot $w={21}><Resize size={13} /></Slot>
      <Slot $w={21}><Indent left /></Slot>
      <Slot $w={20}><Indent /></Slot>
    </MiniRow>
    <MiniRow $h={26}>
      <Pressed $w={20} $h={20}><Glyph>B</Glyph></Pressed>
      <Slot $w={21}><Glyph $italic>I</Glyph></Slot>
      <Slot $w={21}><AlignCenter /></Slot>
      <Gap $w={1} />
      <Pressed $w={31} $h={20} $soft>
        <Slot $w={18}><Highlighter bar="#f5ef3a" /></Slot>
        <Divider $h={18} $color="#ecd98a" />
        <Slot $w={10}><Caret /></Slot>
      </Pressed>
      <Slot $w={21}><FontColor /></Slot>
      <Slot $w={9}><Caret /></Slot>
      <Slot $w={25}><Bucket /></Slot>
      <Slot $w={5}><Caret /></Slot>
      <Slot $w={27}><Borders /></Slot>
      <Slot $w={4}><Caret /></Slot>
      <Slot $w={27}><Painter size={15} /></Slot>
    </MiniRow>
  </MiniToolbar>
)

const RecorderBar = styled.div`
  position: absolute;
  left: 828px;
  top: 636px;
  width: 452px;
  height: 47px;
  display: flex;
  align-items: center;
  background: #131313;
  border: 1px solid #050505;
`
const Elapsed = styled.div`
  width: 64px;
  font-size: 17px;
  font-weight: 300;
  letter-spacing: -0.45px;
  color: #8b8b8b;
`
const StopSquare = styled.div`
  width: 17px;
  height: 17px;
  border-radius: 1.500px;
  background: #ee1122;
`

const gray = "#777"
const Recorder = () => (
  <RecorderBar>
    <Slot $w={43}>
      <svg width="20" height="20" viewBox="0 0 20 20"><path d="M15.500 1l3 3L9 14.500 4.500 16 6 11z" fill={gray} /><path d="M1 17q4-2 6 0t10-.5" fill="none" stroke={gray} strokeWidth="1.300" /></svg>
    </Slot>
    <Divider $h={36} $color="#000" />
    <Gap $w={12} />
    <Slot $w={32}><svg width="15" height="17"><path d="M0 0h5v17H0zM10 0h5v17h-5z" fill="#6b6b6b" /></svg></Slot>
    <Slot $w={32}><StopSquare /></Slot>
    <Gap $w={13} />
    <Divider $h={36} $color="#000" />
    <Gap $w={9} />
    <Elapsed>00:08:32</Elapsed>
    <Gap $w={9} />
    <Slot $w={32}>
      <svg width="18" height="16" viewBox="0 0 18 16"><path d="M1 3h4l1.500-2.500h5L13 3h4v12.500H1z" fill={gray} /><circle cx="9" cy="9" r="3.600" fill={gray} stroke="#131313" strokeWidth="1.600" /></svg>
    </Slot>
    <Slot $w={32}>
      <svg width="17" height="19" viewBox="0 0 17 19"><rect x="5.500" y="1" width="6" height="10" rx="3" fill={gray} /><path d="M3 8q0 6 5.500 6T14 8M8.500 14v3.500M5 17.800h7" fill="none" stroke={gray} strokeWidth="1.400" /><path d="M1 2l15 15" stroke="#131313" strokeWidth="3" /><path d="M1 2l15 15" stroke={gray} strokeWidth="1.300" /></svg>
    </Slot>
    <Slot $w={32}>
      <svg width="18" height="18" viewBox="0 0 18 18"><circle cx="6.500" cy="6.500" r="5" fill="none" stroke={gray} strokeWidth="1.900" /><path d="M10.500 10.500l5.500 5.500" stroke={gray} strokeWidth="3.200" strokeLinecap="round" /></svg>
    </Slot>
    <Slot $w={32}>
      <svg width="18" height="18" viewBox="0 0 18 18"><path d="M9 0l5.500 12q-5.500 3-11 0z" fill={gray} /><path d="M3 13q6 3 12 0l2.500 2q-8.500 5-17 0z" fill={gray} /></svg>
    </Slot>
    <Slot $w={32}>
      <svg width="18" height="18" viewBox="0 0 18 18"><path d="M.5 1h17v12H.5z" fill={gray} /><path d="M3.500 4.500h11M3.500 7h11M3.500 9.500h7" stroke="#131313" strokeWidth="1.200" /><path d="M5.500 13L3.500 17M12.500 13l2 4" stroke={gray} strokeWidth="2" /></svg>
    </Slot>
    <Gap $w={4} />
    <Divider $h={36} $color="#000" />
    <Gap $w={3} />
    <Slot $w={32}>
      <svg width="18" height="18" viewBox="0 0 18 18"><path d="M11 1.200H1.200v15.600h15.600V8" fill="none" stroke={gray} strokeWidth="1.700" /><path d="M16.500 2L7 11.500M6.500 6v6h6" fill="none" stroke={gray} strokeWidth="2" /></svg>
    </Slot>
    <Slot $w={31}><svg width="13" height="13"><path d="M.7.7l11.600 11.600M12.300.7L.7 12.300" stroke="#858585" strokeWidth="1.400" /></svg></Slot>
  </RecorderBar>
)

const Watermark = styled.div`
  position: absolute;
  left: 1006px;
  top: 609px;
  white-space: nowrap;
  color: rgba(128, 128, 128, 0.55);
  font-size: 18px;
  line-height: 24px;
  letter-spacing: -0.1px;
`
const WatermarkNote = styled.div`
  font-size: 13px;
  line-height: 18px;
  letter-spacing: 0.22px;
  color: rgba(140, 140, 140, 0.9);
`
const Corner = styled.svg`
  position: absolute;
  right: 0;
  top: 0;
`

const CornerBrand = () => (
  <Corner width="226" height="226" viewBox="1054 0 226 226">
    <defs>
      <radialGradient id="shade" gradientUnits="userSpaceOnUse" cx="1160" cy="105" r="70">
        <stop offset="0" stopColor="#000" stopOpacity=".16" />
        <stop offset="1" stopColor="#000" stopOpacity="0" />
      </radialGradient>
      <linearGradient id="brand" x1="0" x2="1" y1="0" y2="1">
        <stop offset="0" stopColor="#e53a45" />
        <stop offset=".55" stopColor="#d8254c" />
        <stop offset="1" stopColor="#c8066e" />
      </linearGradient>
    </defs>
    <path d="M1055 0H1280V225z" fill="#000" fillOpacity=".3" />
    <path d="M1055 0H1280V225z" fill="url(#shade)" />
    <g strokeLinejoin="round" strokeLinecap="round">
      <path
        d="M1205 31Q1215 26 1224 32L1246 53Q1251 59 1249 68L1258 81 1242 94 1238 86 1231 90Q1224 92 1217 87L1191 62Q1186 55 1191 46z"
        fill="url(#brand)" fillOpacity=".76" stroke="#f1eeef" strokeWidth="3.500"
      />
      <path d="M1249 67L1241 66 1238 70Q1234 73 1227 71 1214 70 1208 61 1203 51 1212 48 1221 47 1225 57 1227 66 1229 73 1233 76 1234 82L1238 84" fill="none" stroke="#f1eeef" strokeWidth="3.200" />
    </g>
    <text
      transform="translate(1092 18) rotate(44.700)"
      fontFamily="Open Sans, sans-serif" fontSize="23.500" fontWeight="700" fill="#fafafa"
      textLength="241" lengthAdjust="spacingAndGlyphs"
    >
      iTop Screen Recorder
    </text>
  </Corner>
)

export default function App() {
  return (
    <>
      <GlobalStyle />
      <Screen>
        <Header />
        <RibbonBar />
        <Workspace>
          <PageShade>
            <Document />
          </PageShade>
          <VerticalScroll />
        </Workspace>
        <StatusBar>
          <Gap $w={7} />
          <Slot $w={57}>Page: 8 of 9</Slot>
          <Gap $w={8} />
          <Divider />
          <Slot $w={80}>Words: 1,173</Slot>
          <Divider />
          <Slot $w={29}>
            <Icon size={15}><path d="M1 6l6-4 8 5-6 7z" fill="#f5f1dc" stroke="#5a4a80" /><path d="M1 6l8 5v3L1 9z" fill="#4f77b5" /><path d="M8 5l4 3-4 2z" fill="#d2922e" /></Icon>
          </Slot>
          <Slot $w={81}>English (U.S.)</Slot>
          <Gap $w={36} />
          <Divider />
        </StatusBar>
        <TaskbarRow />
        <Mini />
        <Pointer>
          <svg width="11" height="17" viewBox="0 0 11 17"><path d="M.7.7v13l3-2.700 2 5 2.300-1-2-4.600h4.200z" fill="#fff" stroke="#222" strokeWidth=".9" /></svg>
        </Pointer>
        <Recorder />
        <Watermark>
          Activate Windows
          <WatermarkNote>Go to Settings to activate Windows.</WatermarkNote>
        </Watermark>
        <CornerBrand />
      </Screen>
    </>
  )
}
